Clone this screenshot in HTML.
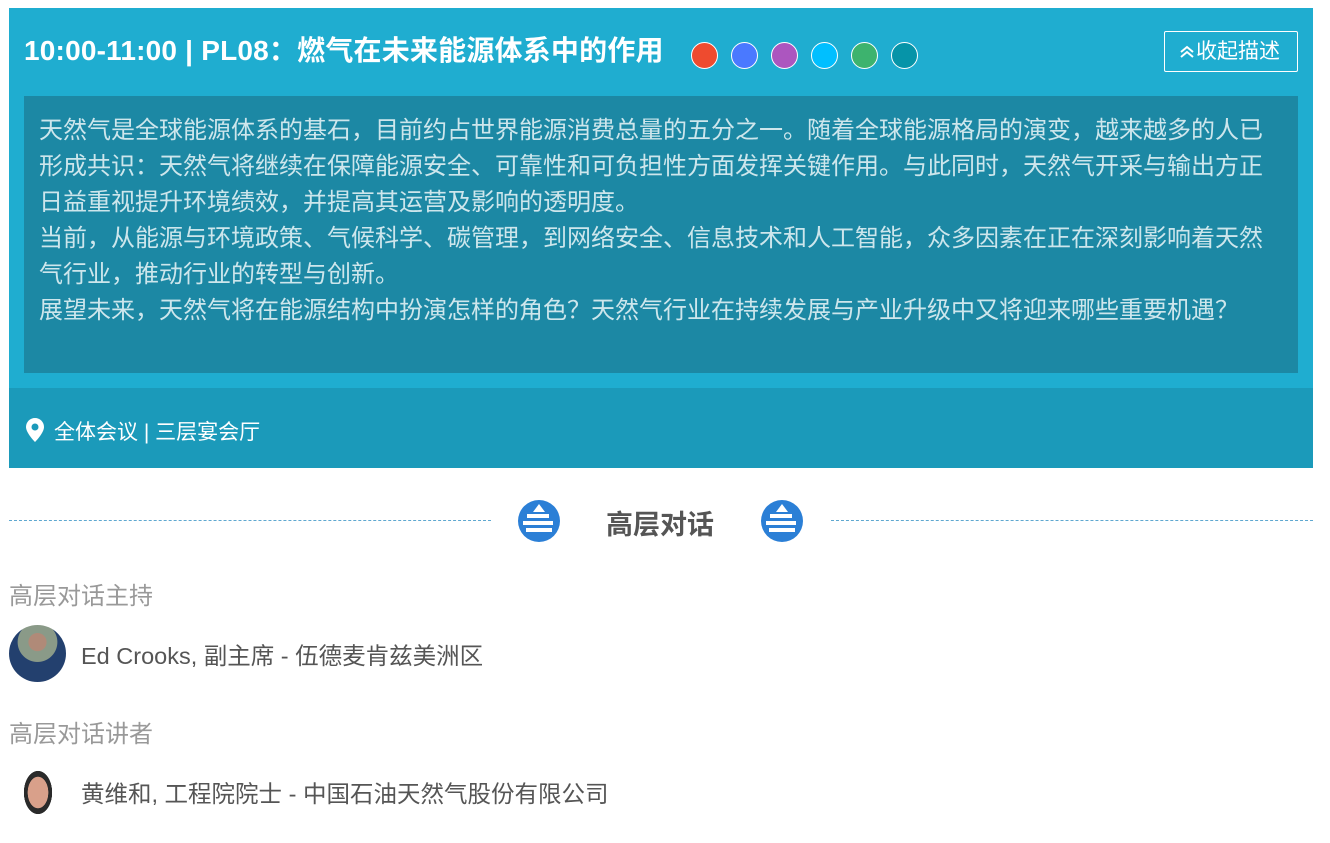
<!DOCTYPE html>
<html><head><meta charset="utf-8"><style>
*{margin:0;padding:0;box-sizing:border-box}
body{width:1330px;height:843px;background:#fff;font-family:"Liberation Sans","Noto Sans CJK SC",sans-serif;position:relative;overflow:hidden}
.panel{position:absolute;left:9px;top:8px;width:1304px;height:460px;background:#1fadd0}
.title{position:absolute;left:15px;top:25px;color:#fff;font-size:28px;letter-spacing:0.2px;font-weight:bold;line-height:36px;white-space:nowrap}
.dot{position:absolute;top:34px;width:27px;height:27px;border-radius:50%;border:1px solid #fff}
.btn{position:absolute;left:1155px;top:23px;width:134px;height:41px;border:1px solid #fff;border-radius:2px;color:#fff;font-size:21px;line-height:39px;padding-left:13px;white-space:nowrap}
.desc{position:absolute;left:15px;top:88px;width:1274px;height:277px;background:#1c88a4;color:#cde6ec;font-size:24px;letter-spacing:0;line-height:36px;padding:17px 0 0 15px;white-space:nowrap;overflow:hidden}
.foot{position:absolute;left:0;top:380px;width:1304px;height:80px;background:#1b9aba;color:#fff;font-size:21px}
.foot span{position:absolute;left:45px;top:28px}
.dash{position:absolute;top:520px;height:0;border-top:1px dashed #5ea8d0}
.sec{position:absolute;top:503px;left:606px;font-size:27px;font-weight:bold;color:#555}
.lbl{position:absolute;left:9px;font-size:24px;color:#999}
.name{position:absolute;left:81px;font-size:23.5px;color:#555;white-space:nowrap}
.av{position:absolute;border-radius:50%}
</style></head><body>
<div class="panel">
<div class="title">10:00-11:00 | PL08：燃气在未来能源体系中的作用</div>
<div class="dot" style="left:682px;background:#ee4b2f"></div>
<div class="dot" style="left:722px;background:#4a79ff"></div>
<div class="dot" style="left:762px;background:#ac56bf"></div>
<div class="dot" style="left:802px;background:#00bfff"></div>
<div class="dot" style="left:842px;background:#3db36e"></div>
<div class="dot" style="left:882px;background:#0694a8"></div>
<div class="btn"><svg width="18" height="14" viewBox="0 0 18 14" style="vertical-align:-1px"><path d="M3 7l6-5 6 5M3 12l6-5 6 5" stroke="#fff" stroke-width="2" fill="none"/></svg>收起描述</div>
<div class="desc">天然气是全球能源体系的基石，目前约占世界能源消费总量的五分之一。随着全球能源格局的演变，越来越多的人已<br>形成共识：天然气将继续在保障能源安全、可靠性和可负担性方面发挥关键作用。与此同时，天然气开采与输出方正<br>日益重视提升环境绩效，并提高其运营及影响的透明度。<br>当前，从能源与环境政策、气候科学、碳管理，到网络安全、信息技术和人工智能，众多因素在正在深刻影响着天然<br>气行业，推动行业的转型与创新。<br>展望未来，天然气将在能源结构中扮演怎样的角色？天然气行业在持续发展与产业升级中又将迎来哪些重要机遇？</div>
<div class="foot"><svg style="position:absolute;left:17px;top:30px" width="18" height="24" viewBox="0 0 18 24"><path d="M9 0C4 0 0 4 0 9c0 6 9 15 9 15s9-9 9-15c0-5-4-9-9-9z" fill="#fff"/><circle cx="9" cy="9" r="3.5" fill="#1b9aba"/></svg><span>全体会议 | 三层宴会厅</span></div>
</div>
<div class="dash" style="left:9px;width:482px"></div>
<div class="dash" style="left:831px;width:482px"></div>
<svg style="position:absolute;left:517px;top:499px" width="44" height="44" viewBox="0 0 44 44"><circle cx="22" cy="22" r="21" fill="#2b7fd6"/><path d="M10 17h22M6 24h30M9 31h26" stroke="#fff" stroke-width="4"/><path d="M22 5l-6 8h12z" fill="#fff"/></svg>
<svg style="position:absolute;left:760px;top:499px" width="44" height="44" viewBox="0 0 44 44"><circle cx="22" cy="22" r="21" fill="#2b7fd6"/><path d="M10 17h22M6 24h30M9 31h26" stroke="#fff" stroke-width="4"/><path d="M22 5l-6 8h12z" fill="#fff"/></svg>
<div class="sec">高层对话</div>
<div class="lbl" style="top:576px">高层对话主持</div>
<div class="av" style="left:9px;top:625px;width:57px;height:57px;background:radial-gradient(circle at 50% 30%,#b08a78 0 18%,#8a9a88 19% 40%,#23406e 41%)"></div>
<div class="name" style="top:637px">Ed Crooks, 副主席 - 伍德麦肯兹美洲区</div>
<div class="lbl" style="top:714px">高层对话讲者</div>
<div class="av" style="left:20px;top:770px;width:36px;height:50px;border-radius:45%;background:radial-gradient(ellipse at 50% 45%,#d9a08a 0 40%,#2a2a2a 41% 55%,#fff 56%)"></div>
<div class="name" style="top:775px">黄维和, 工程院院士 - 中国石油天然气股份有限公司</div>
</body></html>
